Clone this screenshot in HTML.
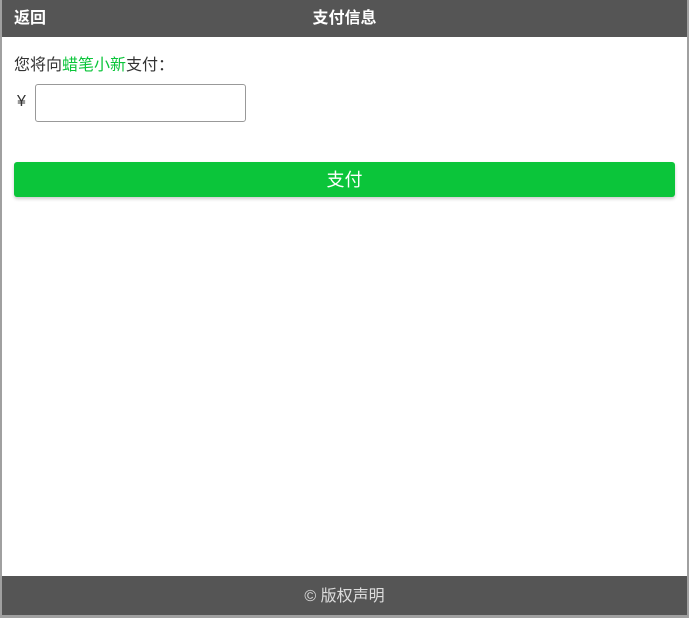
<!DOCTYPE html>
<html><head><meta charset="utf-8"><style>
*{margin:0;padding:0;box-sizing:border-box}
html,body{width:689px;height:618px;overflow:hidden;background:#a0a0a0;font-family:"Liberation Sans","Noto Sans CJK SC",sans-serif}
.page{position:absolute;left:2px;top:0;width:685px;height:615px;background:#fff}
.hd{height:37px;background:#555;color:#fff;font-size:16px;font-weight:bold;position:relative;line-height:37px}
.hd .b{position:absolute;left:12px}
.hd .t{position:absolute;left:0;right:0;text-align:center}
.msg{position:absolute;left:12px;top:51px;font-size:16px;color:#333}
.msg span{color:#0bc53a}
.yen{position:absolute;left:15px;top:93px;font-size:16px;color:#333}
.inp{position:absolute;left:33px;top:84px;width:211px;height:38px;border:1px solid #999;border-radius:3px}
.btn{position:absolute;left:12px;top:162px;width:661px;height:35px;background:#0bc53a;border-radius:3px;color:#fff;font-size:18px;text-align:center;line-height:36px;box-shadow:0 2px 3px rgba(0,0,0,.2)}
.ft{position:absolute;left:0;top:576px;width:685px;height:39px;background:#555;color:#ddd;font-size:16px;text-align:center;line-height:42px}
</style></head><body>
<div class="page">
<div class="hd"><span class="b">返回</span><span class="t">支付信息</span></div>
<div class="msg">您将向<span>蜡笔小新</span>支付：</div>
<div class="yen">¥</div>
<div class="inp"></div>
<div class="btn">支付</div>
<div class="ft">© 版权声明</div>
</div>
</body></html>
